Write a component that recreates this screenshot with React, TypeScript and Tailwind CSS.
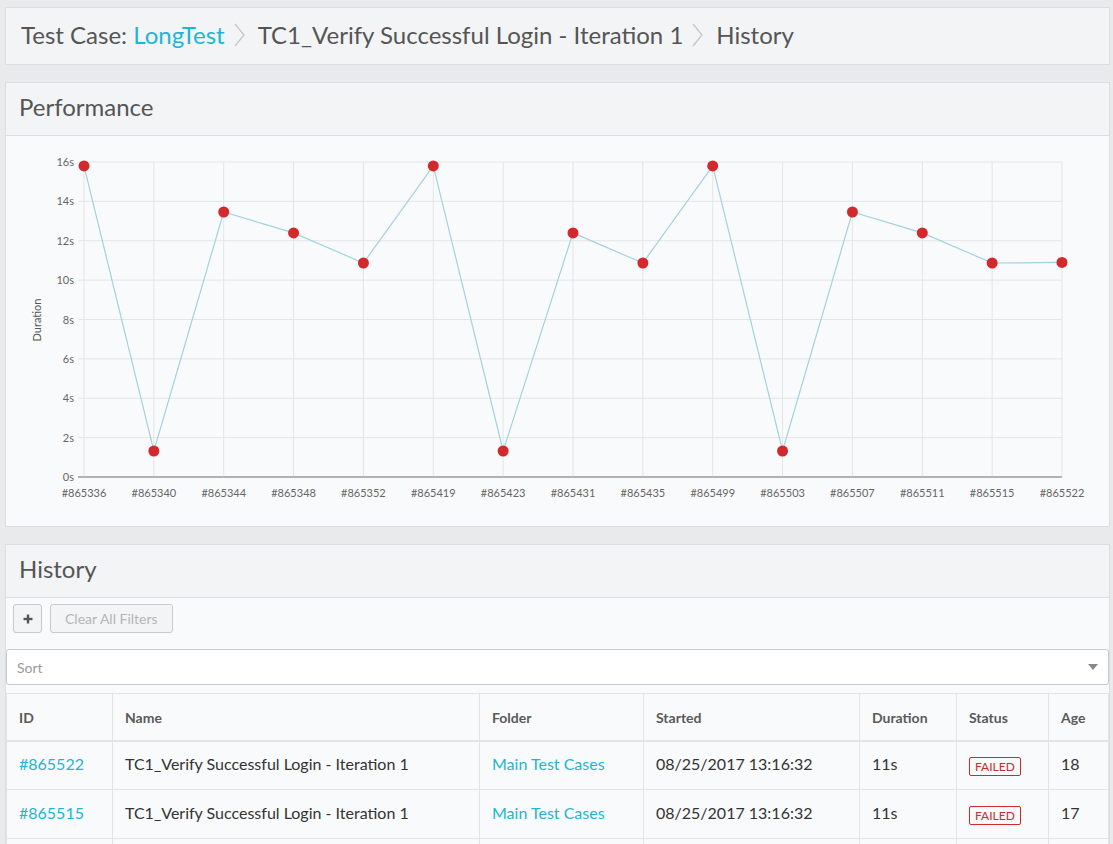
import React from 'react'

const font = { fontFamily: 'Lato, "Open Sans", Arial, sans-serif' }

const points = [
  { id: '#865336', v: 15.8 },
  { id: '#865340', v: 1.32 },
  { id: '#865344', v: 13.46 },
  { id: '#865348', v: 12.4 },
  { id: '#865352', v: 10.87 },
  { id: '#865419', v: 15.8 },
  { id: '#865423', v: 1.32 },
  { id: '#865431', v: 12.4 },
  { id: '#865435', v: 10.87 },
  { id: '#865499', v: 15.8 },
  { id: '#865503', v: 1.32 },
  { id: '#865507', v: 13.46 },
  { id: '#865511', v: 12.4 },
  { id: '#865515', v: 10.87 },
  { id: '#865522', v: 10.9 },
]

const rows = [
  { id: '#865522', age: 18 },
  { id: '#865515', age: 17 },
  { id: '#865511', age: 16 },
]

function Chevron() {
  return (
    <svg width="14" height="26" viewBox="0 0 14 26" className="ml-[7px] mr-[12px]">
      <polyline points="3,2 12,13 3,24" fill="none" stroke="#c4c6c9" strokeWidth="1.3" />
    </svg>
  )
}

function PerfChart() {
  const x0 = 78
  const x1 = 1056
  const yTop = 26
  const yBot = 341
  const step = (x1 - x0) / (points.length - 1)
  const px = (i: number) => x0 + i * step
  const py = (v: number) => yBot - (v / 16) * (yBot - yTop)
  const ticks = [0, 2, 4, 6, 8, 10, 12, 14, 16]
  const line = points.map((p, i) => `${px(i)},${py(p.v)}`).join(' ')

  return (
    <svg width="1103" height="390" className="block">
      {ticks.map((t) => (
        <g key={t}>
          <line x1={x0 - 6} x2={x1} y1={py(t)} y2={py(t)} stroke={t === 0 ? '#9a9a9a' : '#e4e5e7'} strokeWidth="1" />
          <text x={x0 - 10} y={py(t) + 4} textAnchor="end" fontSize="11" fill="#666" style={font}>
            {t}s
          </text>
        </g>
      ))}
      {points.map((p, i) => (
        <g key={p.id}>
          <line x1={px(i)} x2={px(i)} y1={yTop} y2={yBot} stroke="#e4e5e7" strokeWidth="1" />
          <text x={px(i)} y={361} textAnchor="middle" fontSize="11" fill="#666" style={font}>
            {p.id}
          </text>
        </g>
      ))}
      <line x1={x0 - 6} x2={x1} y1={yBot} y2={yBot} stroke="#9a9a9a" strokeWidth="1" />
      <text
        x={0}
        y={0}
        transform="translate(35 184) rotate(-90)"
        textAnchor="middle"
        fontSize="11"
        fill="#555"
        style={font}
      >
        Duration
      </text>
      <polyline points={line} fill="none" stroke="#a3d2de" strokeWidth="1.2" />
      {points.map((p, i) => (
        <circle key={i} cx={px(i)} cy={py(p.v)} r="5.5" fill="#d3282c" />
      ))}
    </svg>
  )
}

export default function App() {
  return (
    <div className="h-[844px] overflow-hidden bg-[#e9eaeb] px-[5px] pt-[7px] pr-[3px]" style={font}>
      <div className="flex h-[58px] items-center border border-[#dcdde0] bg-[#f3f4f6] px-[15px] pb-[3px] text-[24px] text-[#555]">
        <span>Test Case:&nbsp;</span>
        <span className="text-[#21b5d5]">LongTest</span>
        <Chevron />
        <span>TC1_Verify Successful Login - Iteration 1</span>
        <Chevron />
        <span>History</span>
      </div>

      <div className="mt-[17px] border border-[#dcdde0] bg-[#f9fafb]">
        <div className="flex h-[53px] items-center border-b border-[#dcdde0] bg-[#f3f4f6] px-[13px] pb-[4px] text-[24px] text-[#555]">
          Performance
        </div>
        <PerfChart />
      </div>

      <div className="mt-[17px] border border-[#dcdde0] bg-[#f9fafb]">
        <div className="flex h-[53px] items-center border-b border-[#dcdde0] bg-[#f3f4f6] px-[13px] pb-[4px] text-[24px] text-[#555]">
          History
        </div>
        <div className="flex gap-[8px] px-[7px] pt-[6px]">
          <button className="flex h-[29px] w-[29px] items-center justify-center rounded-[3px] border border-[#c8c9cb] bg-[#f3f4f6]">
            <svg width="10" height="10" viewBox="0 0 10 10">
              <rect x="3.8" y="0.5" width="2.4" height="9" fill="#555" />
              <rect x="0.5" y="3.8" width="9" height="2.4" fill="#555" />
            </svg>
          </button>
          <button className="h-[29px] rounded-[3px] border border-[#c8c9cb] bg-[#f3f4f6] px-[14px] text-[14px] text-[#b5b6b8]">
            Clear All Filters
          </button>
        </div>
        <div className="mt-[16px] flex h-[36px] items-center justify-between rounded-[3px] border border-[#c9cacc] bg-white pl-[10px] pr-[10px] text-[14px] text-[#999]">
          <span>Sort</span>
          <svg width="10" height="6" viewBox="0 0 10 6">
            <polygon points="0,0 10,0 5,6" fill="#888" />
          </svg>
        </div>
        <table className="mt-[8px] w-[1102px] table-fixed border-collapse text-left">
          <colgroup>
            <col className="w-[106px]" />
            <col className="w-[367px]" />
            <col className="w-[164px]" />
            <col className="w-[216px]" />
            <col className="w-[97px]" />
            <col className="w-[92px]" />
            <col className="w-[60px]" />
          </colgroup>
          <thead>
            <tr className="h-[47px] border-b-2 border-[#e3e4e6] text-[14px] text-[#5a5a5a]">
              {['ID', 'Name', 'Folder', 'Started', 'Duration', 'Status', 'Age'].map((h) => (
                <th key={h} className="border-x border-t border-[#e3e4e6] px-[12px] pt-[2px] font-bold">
                  {h}
                </th>
              ))}
            </tr>
          </thead>
          <tbody className="text-[16px] text-[#333]">
            {rows.map((r) => (
              <tr key={r.id} className="h-[49px]">
                <td className="border border-[#e3e4e6] px-[12px] pb-[2px] text-[#21b5d5]">{r.id}</td>
                <td className="border border-[#e3e4e6] px-[12px] pb-[2px]">TC1_Verify Successful Login - Iteration 1</td>
                <td className="border border-[#e3e4e6] px-[12px] pb-[2px] text-[#21b5d5]">Main Test Cases</td>
                <td className="border border-[#e3e4e6] px-[12px] pb-[2px]">08/25/2017 13:16:32</td>
                <td className="border border-[#e3e4e6] px-[12px] pb-[2px]">11s</td>
                <td className="border border-[#e3e4e6] px-[12px]">
                  <span className="inline-block rounded-[2px] border border-[#d3282c] px-[5px] text-[12px] leading-[17px] text-[#d3282c]">
                    FAILED
                  </span>
                </td>
                <td className="border border-[#e3e4e6] px-[12px] pb-[2px]">{r.age}</td>
              </tr>
            ))}
          </tbody>
        </table>
      </div>
    </div>
  )
}
